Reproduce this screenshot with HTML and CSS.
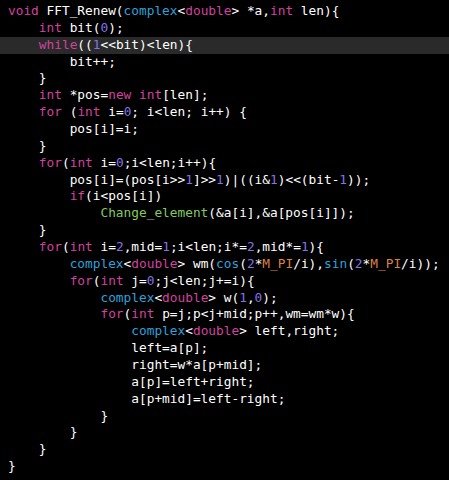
FILE: index.html
```html
<!DOCTYPE html>
<html>
<head>
<meta charset="utf-8">
<link rel="stylesheet" href="styles.css">
</head>
<body>
<div class="editor">
<div class="ln"><span class="k">void</span> FFT_Renew(<span class="t">complex</span>&lt;<span class="k">double</span>&gt; *a,<span class="k">int</span> len){</div>
<div class="ln">    <span class="k">int</span> bit(<span class="n">0</span>);</div>
<div class="ln cur">    <span class="k">while</span>((<span class="n">1</span>&lt;&lt;bit)&lt;len){</div>
<div class="ln">        bit++;</div>
<div class="ln">    }</div>
<div class="ln">    <span class="k">int</span> *pos=<span class="k">new</span> <span class="k">int</span>[len];</div>
<div class="ln">    <span class="k">for</span> (<span class="k">int</span> i=<span class="n">0</span>; i&lt;len; i++) {</div>
<div class="ln">        pos[i]=i;</div>
<div class="ln">    }</div>
<div class="ln">    <span class="k">for</span>(<span class="k">int</span> i=<span class="n">0</span>;i&lt;len;i++){</div>
<div class="ln">        pos[i]=(pos[i&gt;&gt;<span class="n">1</span>]&gt;&gt;<span class="n">1</span>)|((i&amp;<span class="n">1</span>)&lt;&lt;(bit-<span class="n">1</span>));</div>
<div class="ln">        <span class="k">if</span>(i&lt;pos[i])</div>
<div class="ln">            <span class="g">Change_element</span>(&amp;a[i],&amp;a[pos[i]]);</div>
<div class="ln">    }</div>
<div class="ln">    <span class="k">for</span>(<span class="k">int</span> i=<span class="n">2</span>,mid=<span class="n">1</span>;i&lt;len;i*=<span class="n">2</span>,mid*=<span class="n">1</span>){</div>
<div class="ln">        <span class="t">complex</span>&lt;<span class="k">double</span>&gt; wm(<span class="t">cos</span>(<span class="n">2</span>*<span class="m">M_PI</span>/i),<span class="t">sin</span>(<span class="n">2</span>*<span class="m">M_PI</span>/i));</div>
<div class="ln">        <span class="k">for</span>(<span class="k">int</span> j=<span class="n">0</span>;j&lt;len;j+=i){</div>
<div class="ln">            <span class="t">complex</span>&lt;<span class="k">double</span>&gt; w(<span class="n">1</span>,<span class="n">0</span>);</div>
<div class="ln">            <span class="k">for</span>(<span class="k">int</span> p=j;p&lt;j+mid;p++,wm=wm*w){</div>
<div class="ln">                <span class="t">complex</span>&lt;<span class="k">double</span>&gt; left,right;</div>
<div class="ln">                left=a[p];</div>
<div class="ln">                right=w*a[p+mid];</div>
<div class="ln">                a[p]=left+right;</div>
<div class="ln">                a[p+mid]=left-right;</div>
<div class="ln">            }</div>
<div class="ln">        }</div>
<div class="ln">    }</div>
<div class="ln">}</div>
</div>
</body>
</html>
```

FILE: styles.css
```css
html, body {
  margin: 0;
  padding: 0;
  background: #000000;
}
.editor {
  padding-top: 3px;
  font-family: "DejaVu Sans Mono", "Liberation Mono", monospace;
  font-size: 12.8px;
  line-height: 16.87px;
  color: #ffffff;
}
.ln {
  white-space: pre;
  padding-left: 8px;
  height: 16.87px;
}
.cur {
  background: #2a2a2a;
}
.k { color: #d2429f; }
.t { color: #2fa0dc; }
.n { color: #8275e8; }
.m { color: #de8040; }
.g { color: #84c95c; }
```
